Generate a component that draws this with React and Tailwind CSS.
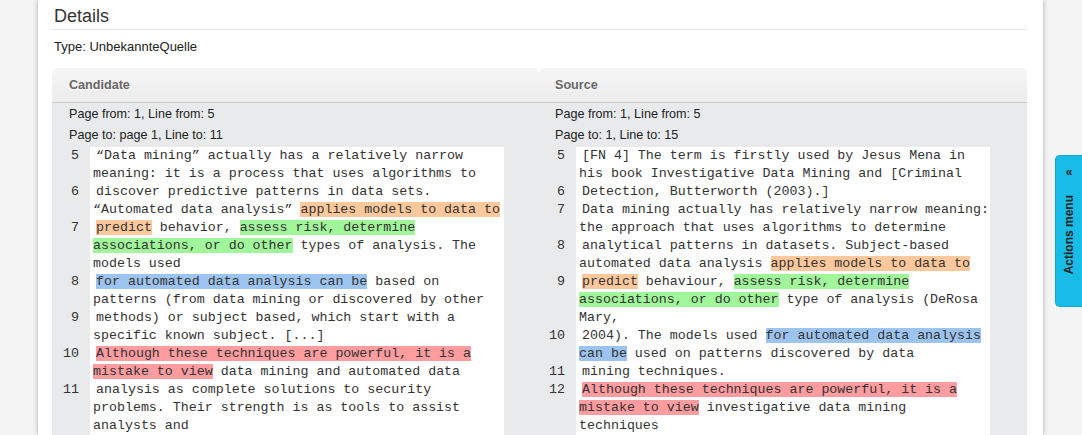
import React from 'react'

const HL = {
  o: 'bg-[#fdc89c]',
  g: 'bg-[#a1f59a]',
  b: 'bg-[#9dc3ef]',
  r: 'bg-[#fe9ca0]',
}

const CANDIDATE = [
  { n: 5, t: [['“Data mining” actually has a relatively narrow meaning: it is a process that uses algorithms to']] },
  { n: 6, t: [['discover predictive patterns in data sets. “Automated data analysis” '], ['applies models to data to', 'o']] },
  { n: 7, t: [['predict', 'o'], [' behavior, '], ['assess risk, determine associations, or do other', 'g'], [' types of analysis. The models used']] },
  { n: 8, t: [['for automated data analysis can be', 'b'], [' based on patterns (from data mining or discovered by other']] },
  { n: 9, t: [['methods) or subject based, which start with a specific known subject. [...]']] },
  { n: 10, t: [['Although these techniques are powerful, it is a mistake to view', 'r'], [' data mining and automated data']] },
  { n: 11, t: [['analysis as complete solutions to security problems. Their strength is as tools to assist analysts and']] },
  { n: 12, t: [['investigators.']] },
]

const SOURCE = [
  { n: 5, t: [['[FN 4] The term is firstly used by Jesus Mena in his book Investigative Data Mining and [Criminal']] },
  { n: 6, t: [['Detection, Butterworth (2003).]']] },
  { n: 7, t: [['Data mining actually has relatively narrow meaning: the approach that uses algorithms to determine']] },
  { n: 8, t: [['analytical patterns in datasets. Subject-based automated data analysis '], ['applies models to data to', 'o']] },
  { n: 9, t: [['predict', 'o'], [' behaviour, '], ['assess risk, determine associations, or do other', 'g'], [' type of analysis (DeRosa Mary,']] },
  { n: 10, t: [['2004). The models used '], ['for automated data analysis can be', 'b'], [' used on patterns discovered by data']] },
  { n: 11, t: [['mining techniques.']] },
  { n: 12, t: [['Although these techniques are powerful, it is a mistake to view', 'r'], [' investigative data mining techniques']] },
  { n: 13, t: [['(Mena 2003).']] },
]

function CodeRows({ rows, numWidth }) {
  return (
    <div className="mt-[1px] font-['Liberation_Mono',monospace] text-[13.3px] leading-[18px] text-[#333]">
      {rows.map(row => (
        <div key={row.n} className="flex">
          <div className={`${numWidth} shrink-0 text-right pr-[11px]`}>{row.n}</div>
          <div className="w-[414px] shrink-0 bg-white pl-[3px] indent-[3px]">
            {row.t.map(([text, c], i) => (
              <span key={i} className={c ? HL[c] : ''}>{text}</span>
            ))}
          </div>
        </div>
      ))}
    </div>
  )
}

function Column({ title, from, to, rows, numWidth, pad }) {
  return (
    <div className="flex flex-col">
      <div className={`h-[35px] pt-[1px] rounded-t-[6px] bg-gradient-to-b from-[#f6f6f6] to-[#ececec] border-b border-[#c9c9c9] ${pad} flex items-center text-[12.6px] font-bold text-[#666] [text-shadow:0_1px_0_#fff]`}>
        {title}
      </div>
      <div className="flex-1 bg-[#e9eaeb] pt-[1px]">
        <div className={`${pad} text-[12.6px] leading-[21px] text-[#222]`}>
          <div>{from}</div>
          <div>{to}</div>
        </div>
        <CodeRows rows={rows} numWidth={numWidth} />
      </div>
    </div>
  )
}

export default function App() {
  return (
    <div className="relative h-[435px] overflow-hidden bg-[#f4f4f4] font-['Liberation_Sans',Arial,sans-serif]">
      <div className="ml-[38px] w-[1005px] h-[435px] bg-white shadow-[0_0_5px_rgba(0,0,0,0.3)] pl-[14px] pr-[16px]">
        <div className="pt-[6px] pb-[3px] border-b border-[#e6e6e6]">
          <h2 className="pl-[2px] text-[18px] leading-[20px] text-[#333]">Details</h2>
        </div>
        <div className="mt-[9px] pl-[2px] text-[13px] leading-[16px] text-[#222]">Type: UnbekannteQuelle</div>
        <div className="mt-[13px] grid grid-cols-[487px_1fr]">
          <Column
            title="Candidate"
            from="Page from: 1, Line from: 5"
            to="Page to: page 1, Line to: 11"
            rows={CANDIDATE}
            numWidth="w-[38px]"
            pad="pl-[17px]"
          />
          <Column
            title="Source"
            from="Page from: 1, Line from: 5"
            to="Page to: 1, Line to: 15"
            rows={SOURCE}
            numWidth="w-[37px]"
            pad="pl-[16px]"
          />
        </div>
      </div>

      <div className="absolute right-0 top-[155px] w-[27px] h-[152px] rounded-l-[5px] bg-[#17bde6] border border-r-0 border-[#10a9cf] flex flex-col items-center pt-[9px] text-[#222] font-bold text-[12px]">
        <span className="leading-[14px]">«</span>
        <span className="mt-[16px] leading-[14px] [writing-mode:vertical-rl] rotate-180">Actions menu</span>
      </div>
    </div>
  )
}
